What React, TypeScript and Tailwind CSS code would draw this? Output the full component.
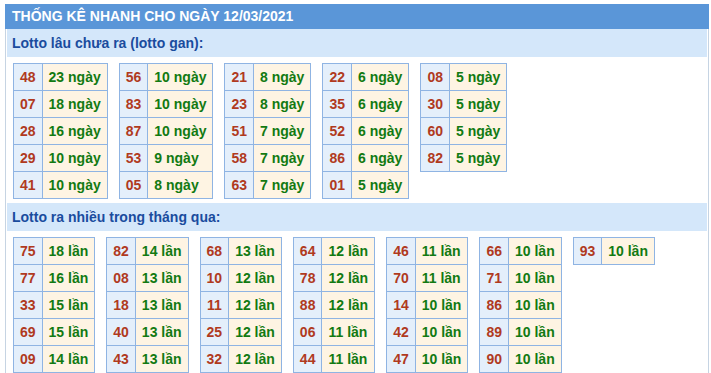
import React from "react";

type Pair = [string, string];

const GAN: Pair[][] = [
  [["48", "23"], ["07", "18"], ["28", "16"], ["29", "10"], ["41", "10"]],
  [["56", "10"], ["83", "10"], ["87", "10"], ["53", "9"], ["05", "8"]],
  [["21", "8"], ["23", "8"], ["51", "7"], ["58", "7"], ["63", "7"]],
  [["22", "6"], ["35", "6"], ["52", "6"], ["86", "6"], ["01", "5"]],
  [["08", "5"], ["30", "5"], ["60", "5"], ["82", "5"]],
];

const NHIEU: Pair[][] = [
  [["75", "18"], ["77", "16"], ["33", "15"], ["69", "15"], ["09", "14"]],
  [["82", "14"], ["08", "13"], ["18", "13"], ["40", "13"], ["43", "13"]],
  [["68", "13"], ["10", "12"], ["11", "12"], ["25", "12"], ["32", "12"]],
  [["64", "12"], ["78", "12"], ["88", "12"], ["06", "11"], ["44", "11"]],
  [["46", "11"], ["70", "11"], ["14", "10"], ["42", "10"], ["47", "10"]],
  [["66", "10"], ["71", "10"], ["86", "10"], ["89", "10"], ["90", "10"]],
  [["93", "10"]],
];

function LotoTable({ rows, unit }: { rows: Pair[]; unit: string }) {
  return (
    <table className="border-collapse text-[14px] font-bold leading-4">
      <tbody>
        {rows.map(([so, n]) => (
          <tr key={so}>
            <td className="border border-[#8fb4e3] bg-[#e4effb] px-[6px] py-[5px] text-center text-[#b03a1e]">{so}</td>
            <td className="border border-[#8fb4e3] bg-[#fef4e3] px-[6px] py-[5px] whitespace-nowrap text-[#127a12]">
              {n} {unit}
            </td>
          </tr>
        ))}
      </tbody>
    </table>
  );
}

function Section({ title, groups, unit }: { title: string; groups: Pair[][]; unit: string }) {
  return (
    <div>
      <div className="ml-px flex h-[28px] items-center bg-[#d4e7fa] pl-[5px] text-[14px] font-bold text-[#1a4c9e]">
        {title}
      </div>
      <div className="flex flex-wrap items-start gap-x-[11px] pb-[4px] pl-[7px] pt-[6px]">
        {groups.map((g, i) => <LotoTable key={i} rows={g} unit={unit} />)}
      </div>
    </div>
  );
}

export default function App() {
  return (
    <div className="min-h-screen bg-white pl-[5px] pt-[4px] font-['Liberation_Sans',Arial,sans-serif]">
      <div className="w-[704px]">
        <div className="flex h-[25px] items-center bg-[#5a96d8] pl-[7px] text-[14px] font-bold text-white">
          THỐNG KÊ NHANH CHO NGÀY 12/03/2021
        </div>
        <div className="border-x border-[#c6d4e3] pr-px">
          <Section title="Lotto lâu chưa ra (lotto gan):" groups={GAN} unit="ngày" />
          <Section title="Lotto ra nhiều trong tháng qua:" groups={NHIEU} unit="lần" />
        </div>
      </div>
    </div>
  );
}
